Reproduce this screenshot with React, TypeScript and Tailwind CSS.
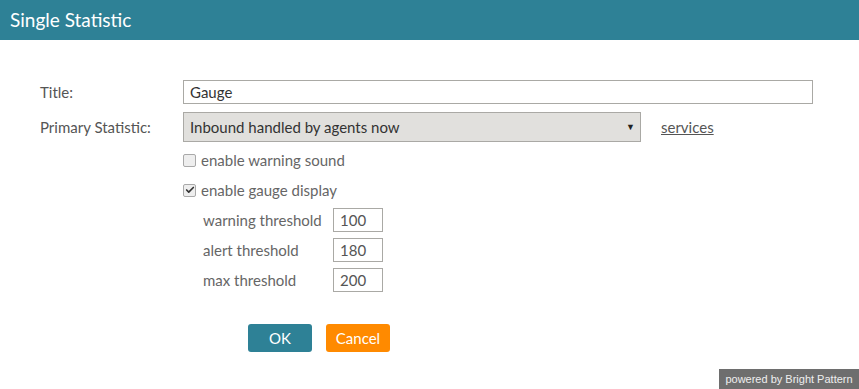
import { Check } from "lucide-react";

const font = { fontFamily: "Lato, 'Noto Sans', sans-serif" };

function Box({ checked }: { checked?: boolean }) {
  return (
    <span className="flex h-[13px] w-[13px] items-center justify-center rounded-[2px] border border-[#a9a9a9] bg-[#eeeeee]">
      {checked && <Check className="h-[10px] w-[10px] text-[#333]" strokeWidth={4} />}
    </span>
  );
}

function Threshold({ label, value }: { label: string; value: string }) {
  return (
    <div className="flex h-[30px] items-center pl-5">
      <span className="w-[130px] text-[15px] text-[#666]">{label}</span>
      <div className="flex h-[24px] w-[50px] items-center border border-[#aaa9a5] px-[6px] text-[15px] text-[#555]">{value}</div>
    </div>
  );
}

export default function App() {
  return (
    <div className="relative h-[389px] w-full bg-white" style={font}>
      <div className="flex h-10 items-center bg-[#2e8196] px-[10px] text-[19px] text-white">Single Statistic</div>

      <div className="pl-10 pt-10">
        <div className="flex h-[24px] items-center">
          <span className="w-[143px] text-[15px] text-[#555]">Title:</span>
          <div className="flex h-[24px] w-[630px] items-center border border-[#aaa9a5] px-[6px] text-[15px] text-[#333]">Gauge</div>
        </div>

        <div className="mt-2 flex h-[30px] items-center">
          <span className="w-[143px] text-[15px] text-[#555]">Primary Statistic:</span>
          <div className="flex h-[30px] w-[458px] items-center justify-between border border-[#aaa9a5] bg-[#e1e0dd] pl-[6px] pr-[5px] text-[15px] text-[#333]">
            <span>Inbound handled by agents now</span>
            <span className="text-[9px] text-[#222]">▼</span>
          </div>
          <a className="ml-5 text-[15px] text-[#555] underline">services</a>
        </div>

        <div className="ml-[143px] mt-[3px]">
          <div className="flex h-[30px] items-center gap-[5px] text-[15px] text-[#666]">
            <Box />
            <span>enable warning sound</span>
          </div>
          <div className="flex h-[30px] items-center gap-[5px] text-[15px] text-[#666]">
            <Box checked />
            <span>enable gauge display</span>
          </div>
          <Threshold label="warning threshold" value="100" />
          <Threshold label="alert threshold" value="180" />
          <Threshold label="max threshold" value="200" />

          <div className="ml-[65px] mt-[29px] flex gap-[14px]">
            <button className="h-[28px] w-[64px] rounded-[3px] bg-[#2e8196] text-[15px] text-white">OK</button>
            <button className="h-[28px] w-[64px] rounded-[3px] bg-[#ff8a00] text-[15px] text-white">Cancel</button>
          </div>
        </div>
      </div>

      <div
        className="absolute bottom-0 right-0 flex h-5 w-[140px] items-center justify-center bg-[#6e6e6e] text-[11px] text-[#eee]"
        style={{ fontFamily: "'Liberation Sans', Arial, sans-serif" }}
      >
        powered by Bright Pattern
      </div>
    </div>
  );
}
